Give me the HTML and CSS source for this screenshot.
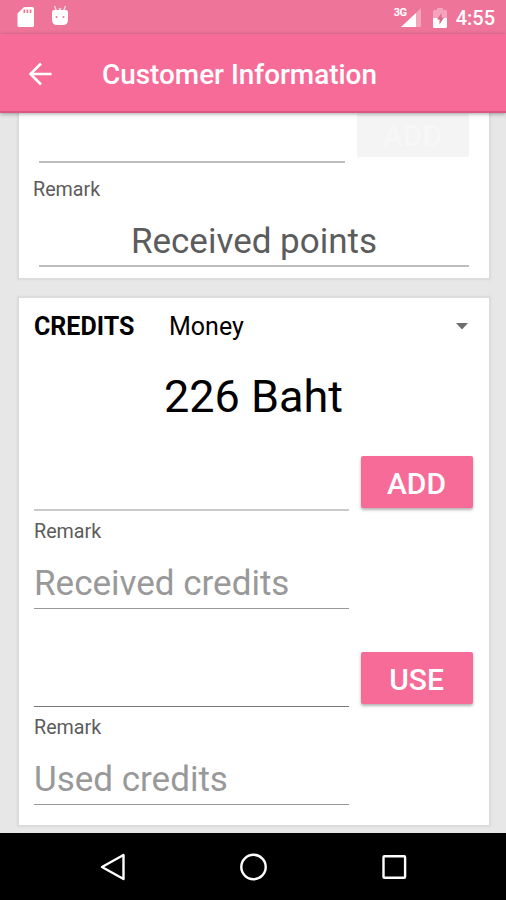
FILE: index.html
```html
<!DOCTYPE html>
<html lang="en">
    <head>
        <meta charset="utf-8">
        <title>Customer Information</title>
        <link rel="stylesheet" href="styles.css">
    </head>
    <body>
        <div class="status-bar">
            <svg class="sd-icon" width="18" height="22" viewBox="0 0 18 22">
                <path fill="#fff" fill-rule="evenodd" d="M7 1h8.500q1.500 0 1.500 1.500v17q0 1.500-1.500 1.500h-13.500q-1.500 0-1.500-1.500v-12zM6.500 3.500v3.500h1.700v-3.500zM9.600 3.500v3.500h1.700v-3.500zM12.700 3.500v3.500h1.700v-3.500z"/>
            </svg>
            <svg class="droid-icon" width="18" height="22" viewBox="0 0 18 22">
                <path stroke="#fff" stroke-opacity=".8" stroke-width="1.300" d="M3.500 0l2 5M14.500 0l-2 5M8 2l1 2 1-2"/>
                <path fill="#fff" d="M3 4h12q2 0 2 2v7q0 6-5 6h-6q-5 0-5-6v-7q0-2 2-2z"/>
                <circle cx="5.500" cy="11" r="1" fill="#ee7499"/>
                <circle cx="12.500" cy="11" r="1" fill="#ee7499"/>
            </svg>
            <span class="network">3G</span>
            <svg class="signal-icon" width="20" height="20" viewBox="0 0 20 20">
                <path fill="#fff" fill-opacity=".35" d="M20 0v19h-5v-14z"/>
                <path fill="#fff" d="M15 5v14h-15z"/>
            </svg>
            <svg class="battery-icon" width="14" height="20" viewBox="0 0 14 20">
                <path fill="#fff" fill-opacity=".35" d="M0 3.500q0-1.500 1.500-1.500h2.500v-2h6v2h2.500q1.500 0 1.500 1.500v6.500h-14z"/>
                <path fill="#fff" d="M0 10h14v8.500q0 1.500-1.500 1.500h-11q-1.500 0-1.500-1.500z"/>
                <path fill="#e0688f" d="M8.500 5l-4.500 6.500h2.500v5l4.500-7h-2.500z"/>
            </svg>
            <span class="clock">4:55</span>
        </div>

        <div class="toolbar">
            <svg class="back-icon" width="24" height="24" viewBox="0 0 24 24">
                <path fill="none" stroke="#fff" stroke-width="2.600" d="M23.500 12h-21M13 1.500l-10.500 10.500 10.500 10.500"/>
            </svg>
            <h1>Customer Information</h1>
        </div>

        <div class="content">
            <div class="card points">
                <div class="row">
                    <div class="field"></div>
                    <button class="btn disabled" disabled>ADD</button>
                </div>
                <div class="label">Remark</div>
                <div class="field remark">Received points</div>
            </div>

            <div class="card credits">
                <div class="card-header">
                    <h2>CREDITS</h2>
                    <span>Money</span>
                    <svg class="arrow-icon" width="12" height="7" viewBox="0 0 12 7">
                        <path fill="#6d6d6d" d="M0 0h12l-6 6.500z"/>
                    </svg>
                </div>
                <div class="balance">226 Baht</div>
                <div class="row">
                    <div class="field"></div>
                    <button class="btn">ADD</button>
                </div>
                <div class="label">Remark</div>
                <div class="field remark">Received credits</div>
                <div class="row use">
                    <div class="field"></div>
                    <button class="btn">USE</button>
                </div>
                <div class="label">Remark</div>
                <div class="field remark">Used credits</div>
            </div>
        </div>

        <div class="nav-bar">
            <svg width="28" height="28" viewBox="0 0 28 28">
                <path fill="none" stroke="#fff" stroke-width="2.400" stroke-linejoin="round" d="M25.500 2v24l-21.500-12z"/>
            </svg>
            <svg width="28" height="28" viewBox="0 0 28 28">
                <circle cx="14.500" cy="14" r="12.200" fill="none" stroke="#fff" stroke-width="2.400"/>
            </svg>
            <svg width="28" height="28" viewBox="0 0 28 28">
                <rect x="3.500" y="3.200" width="21.600" height="21.600" rx="1" fill="none" stroke="#fff" stroke-width="2.400"/>
            </svg>
        </div>
    </body>
</html>
```
FILE: styles.css
```css
* {
    box-sizing: border-box;
}

body {
    display: flex;
    flex-direction: column;
    height: 900px;
    margin: 0;
    overflow: hidden;
    background-color: #e7e7e7;
    font-family: Roboto, sans-serif;
}

svg {
    display: block;
    flex-shrink: 0;
}

h1, h2 {
    margin: 0;
}

.status-bar {
    display: flex;
    align-items: flex-start;
    height: 34px;
    padding: 6px 11px 0 17px;
    background-color: #ee7499;
    color: #fff;
}

.droid-icon {
    margin-left: 16px;
}

.network {
    margin-left: auto;
    font-size: 11px;
    font-weight: 700;
    line-height: 13px;
    letter-spacing: -0.5px;
}

.signal-icon {
    margin: 2px 0 0 -6px;
}

.battery-icon {
    margin: 2px 0 0 12px;
}

.clock {
    margin-left: 9px;
    font-size: 20px;
    font-weight: 500;
    line-height: 25px;
}

.toolbar {
    display: flex;
    align-items: center;
    position: relative;
    height: 79px;
    margin-bottom: -1px;
    padding: 3px 28px 0;
    background-color: #f76b98;
    border-bottom: 2px solid #d9587f;
    box-shadow: 0 1px 4px rgba(0, 0, 0, 0.35);
    color: #fff;
}

.toolbar h1 {
    margin-left: 50px;
    padding-top: 2px;
    font-size: 27.9px;
    font-weight: 500;
    line-height: 36px;
}

.content {
    height: 721px;
    padding: 0 17px 0 19px;
}

.card {
    background-color: #fff;
    box-shadow: 0 0 2px 2px #dadada;
}

.points {
    height: 166px;
    padding: 0 20px;
}

.credits {
    height: 527px;
    margin-top: 20px;
    padding: 0 16px 0 15px;
}

.row {
    display: flex;
    justify-content: space-between;
}

.field {
    width: 315px;
    height: 55px;
    border-bottom: 2px solid #cacaca;
}

.btn {
    width: 112px;
    height: 52px;
    padding: 2px 1px 0 0;
    border: 0;
    border-radius: 2px;
    background-color: #f76b98;
    box-shadow: 0 2px 3px rgba(0, 0, 0, 0.3);
    color: #fff;
    font-family: inherit;
    font-size: 30px;
    font-weight: 500;
}

.label {
    color: #5c5c5c;
    font-size: 19.7px;
    line-height: 24px;
}

.remark {
    height: 65px;
    padding-top: 15px;
    color: #999;
    font-size: 35px;
    line-height: 50px;
}

.points .row .field {
    width: 306px;
    height: 51px;
    border-color: #bebebe;
}

.points .disabled {
    height: 45px;
    background-color: #f4f4f4;
    box-shadow: none;
    color: #f7f7f7;
}

.points .label {
    margin: 15px 0 0 -6px;
}

.points .remark {
    width: 100%;
    height: 65px;
    padding-top: 13px;
    border-color: #bebebe;
    color: #5c5c5c;
    line-height: 53px;
    text-align: center;
}

.card-header {
    display: flex;
    align-items: center;
    height: 58px;
    padding-bottom: 2px;
    font-size: 25px;
}

.card-header h2 {
    width: 135px;
    font-size: 25px;
    font-weight: 700;
}

.arrow-icon {
    margin: 0 5px 0 auto;
}

.balance {
    height: 100px;
    font-size: 45px;
    line-height: 82px;
    text-align: center;
}

.credits .label {
    margin-top: 9px;
}

.credits .remark {
    border-bottom: 1px solid #999;
}

.use {
    margin-top: 43px;
}

.use .field {
    border-bottom: 1px solid #777;
}

.nav-bar {
    display: flex;
    justify-content: space-between;
    height: 67px;
    padding: 20px 98px 0;
    background-color: #000;
}
```
